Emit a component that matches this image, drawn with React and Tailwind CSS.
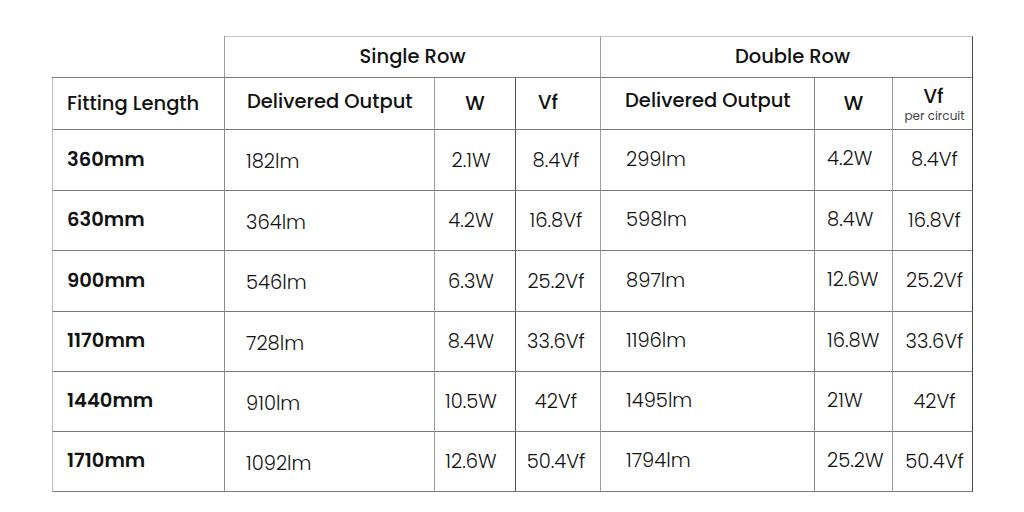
import React from "react";

const rows = [
  ["360mm", "182lm", "2.1W", "8.4Vf", "299lm", "4.2W", "8.4Vf", "h-[61px]"],
  ["630mm", "364lm", "4.2W", "16.8Vf", "598lm", "8.4W", "16.8Vf", "h-[60px]"],
  ["900mm", "546lm", "6.3W", "25.2Vf", "897lm", "12.6W", "25.2Vf", "h-[61px]"],
  ["1170mm", "728lm", "8.4W", "33.6Vf", "1196lm", "16.8W", "33.6Vf", "h-[60px]"],
  ["1440mm", "910lm", "10.5W", "42Vf", "1495lm", "21W", "42Vf", "h-[60px]"],
  ["1710mm", "1092lm", "12.6W", "50.4Vf", "1794lm", "25.2W", "50.4Vf", "h-[60px]"],
];

export default function App() {
  return (
    <div
      className="w-[1024px] h-[512px] bg-white text-[#111]"
      style={{ fontFamily: "Poppins, 'Open Sans', sans-serif" }}
    >
      <div className="pt-[36px] pl-[52px]">
        <table className="border-separate border-spacing-0 table-fixed w-[921px] text-[19.5px]">
          <colgroup>
            <col className="w-[173px]" />
            <col className="w-[210px]" />
            <col className="w-[81px]" />
            <col className="w-[85px]" />
            <col className="w-[214px]" />
            <col className="w-[78px]" />
            <col className="w-[80px]" />
          </colgroup>
          <thead>
            <tr className="h-[42px]">
              <th className="border-b border-r border-b-[#7a7a7a] border-r-[#9a9a9a] p-0"></th>
              <th colSpan={3} className="border-t border-r border-b border-t-[#c4c4c4] border-r-[#9a9a9a] border-b-[#7a7a7a] p-0 font-medium text-center">
                Single Row
              </th>
              <th colSpan={3} className="border-t border-r border-b border-t-[#c4c4c4] border-r-[#444] border-b-[#7a7a7a] p-0 pl-[12px] font-medium text-center">
                Double Row
              </th>
            </tr>
            <tr className="h-[52px]">
              <th className="border-l border-r border-b border-l-[#bdbdbd] border-r-[#8a8a8a] border-b-[#7a7a7a] text-left pl-[14px] pt-[1px] font-medium">
                Fitting Length
              </th>
              <th className="border-r border-b border-r-[#9a9a9a] border-b-[#7a7a7a] text-left pl-[22px] pb-[4px] font-medium">
                Delivered Output
              </th>
              <th className="border-r border-b border-r-[#555] border-b-[#7a7a7a] text-center font-medium">W</th>
              <th className="border-r border-b border-r-[#9a9a9a] border-b-[#7a7a7a] text-center pr-[20px] pb-[2px] font-medium">Vf</th>
              <th className="border-r border-b border-r-[#8a8a8a] border-b-[#7a7a7a] text-left pl-[24px] pb-[6px] font-medium">
                Delivered Output
              </th>
              <th className="border-r border-b border-r-[#9a9a9a] border-b-[#7a7a7a] text-center font-medium">W</th>
              <th className="border-r border-b border-r-[#444] border-b-[#7a7a7a] text-center font-medium p-0 pl-[2px]">
                <div className="flex flex-col items-center leading-none pt-[2px]">
                  <span>Vf</span>
                  <span className="text-[12px] font-normal text-[#444] mt-[4px] pl-[2px]">per circuit</span>
                </div>
              </th>
            </tr>
          </thead>
          <tbody>
            {rows.map((r, i) => (
              <tr key={i} className={r[7]}>
                <td className="border-l border-r border-b border-l-[#bdbdbd] border-r-[#8a8a8a] border-b-[#7a7a7a] pl-[14px] pb-[1px] font-semibold">
                  {r[0]}
                </td>
                <td className="border-r border-b border-r-[#9a9a9a] border-b-[#7a7a7a] pl-[21px] pt-[4px] font-light">{r[1]}</td>
                <td className="border-r border-b border-r-[#555] border-b-[#7a7a7a] text-center pr-[8px] pt-[1px] font-light">{r[2]}</td>
                <td className="border-r border-b border-r-[#9a9a9a] border-b-[#7a7a7a] text-center pr-[4px] pt-[1px] font-light">{r[3]}</td>
                <td className="border-r border-b border-r-[#8a8a8a] border-b-[#7a7a7a] pl-[25px] pb-[1px] font-light">{r[4]}</td>
                <td className="border-r border-b border-r-[#9a9a9a] border-b-[#7a7a7a] pl-[12px] pb-[2px] font-light">{r[5]}</td>
                <td className="border-r border-b border-r-[#444] border-b-[#7a7a7a] text-center pl-[4px] font-light">{r[6]}</td>
              </tr>
            ))}
          </tbody>
        </table>
      </div>
    </div>
  );
}
